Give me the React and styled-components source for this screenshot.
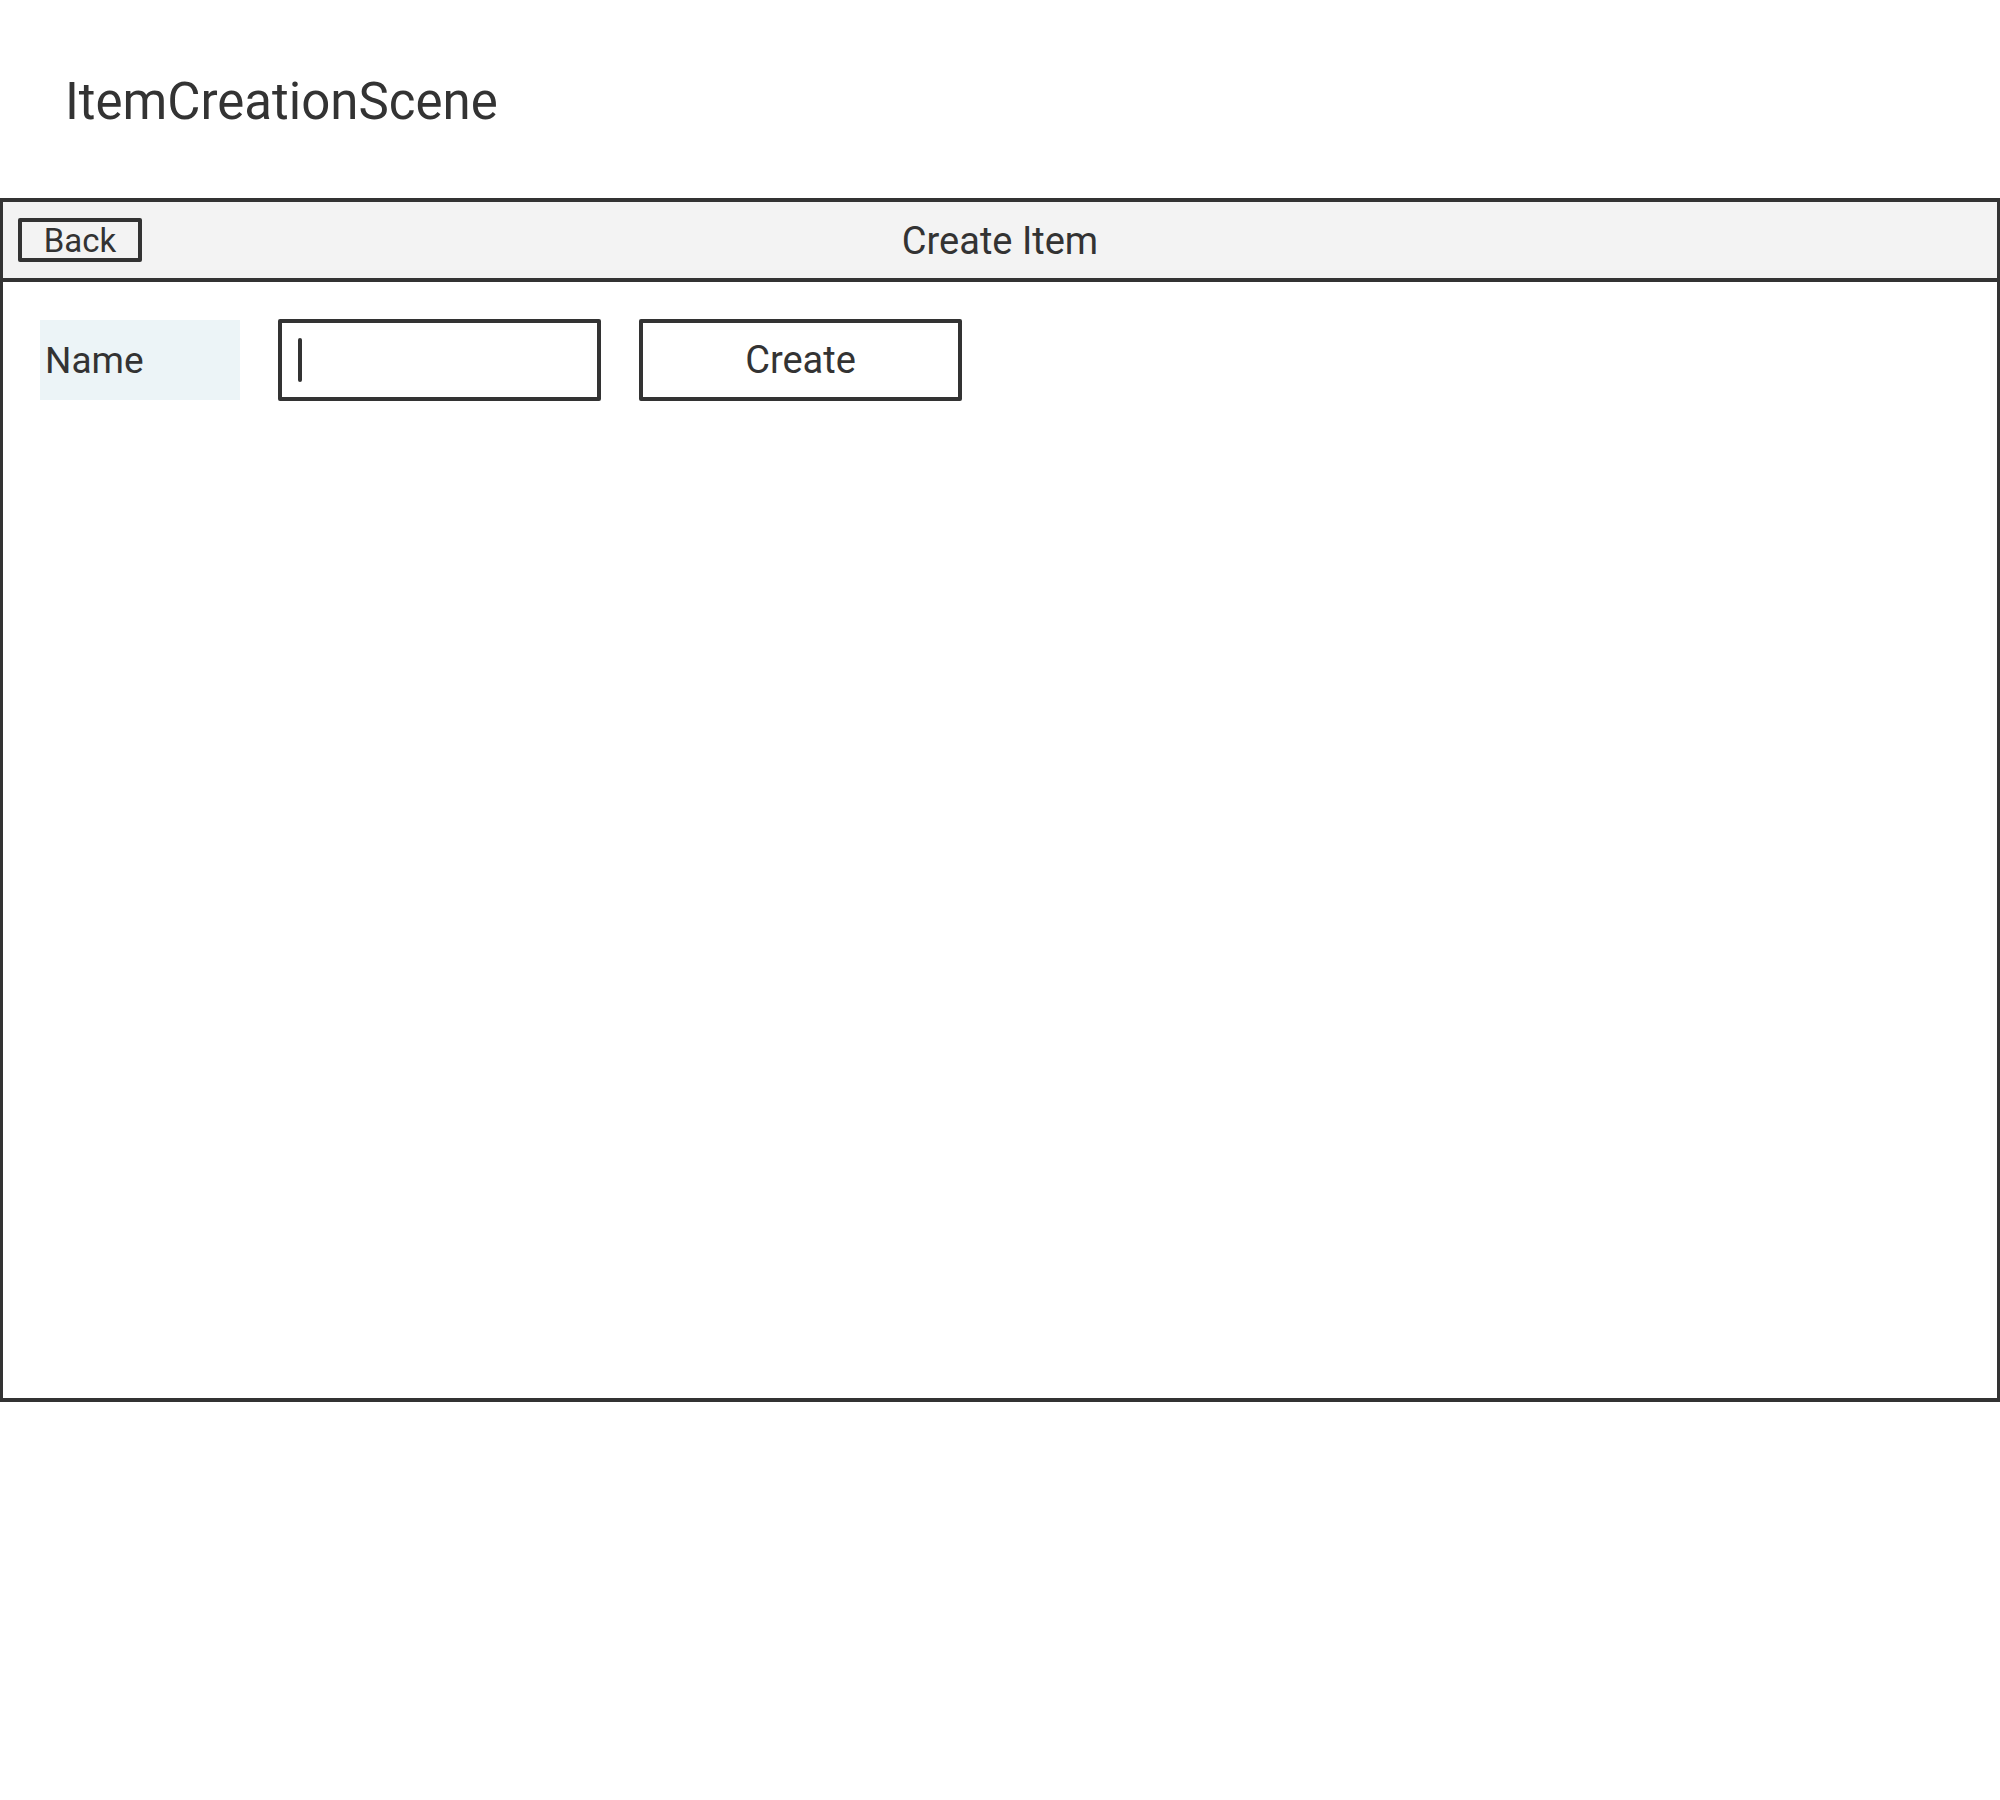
import React from "react";
import styled, { createGlobalStyle } from "styled-components";

const GlobalStyle = createGlobalStyle`
  html, body {
    margin: 0;
    padding: 0;
    background: #ffffff;
  }
  body {
    font-family: Roboto, "Liberation Sans", sans-serif;
    color: #333333;
  }
`;

const App = () => {
  return (
    <Page>
      <GlobalStyle />
      <SceneTitle>ItemCreationScene</SceneTitle>
      <Frame>
        <NavBar>
          <NavLeft>
            <BackButton>Back</BackButton>
          </NavLeft>
          <NavTitle>Create Item</NavTitle>
          <div />
        </NavBar>
        <Content>
          <FormRow>
            <FieldLabel>Name</FieldLabel>
            <TextField>
              <Caret />
            </TextField>
            <ActionButton>Create</ActionButton>
          </FormRow>
        </Content>
      </Frame>
    </Page>
  );
};

export default App;

const Page = styled.div`
  width: 2000px;
  min-height: 1800px;
  background: #fff;
`;

const SceneTitle = styled.h1`
  margin: 0;
  height: 198px;
  display: flex;
  align-items: center;
  padding-left: 65px;
  padding-top: 4px;
  box-sizing: border-box;
  font-size: 51px;
  font-weight: 400;
  line-height: 1;
  color: #333;
`;

const Frame = styled.div`
  width: 2000px;
  height: 1204px;
  box-sizing: border-box;
  border: 3px solid #333;
  border-top-width: 4px;
  border-bottom-width: 4px;
  display: flex;
  flex-direction: column;
`;

const NavBar = styled.div`
  height: 80px;
  box-sizing: border-box;
  background: #f3f3f3;
  border-bottom: 4px solid #333;
  display: grid;
  grid-template-columns: 1fr auto 1fr;
  align-items: center;
`;

const NavLeft = styled.div`
  padding-left: 15px;
  display: flex;
  align-items: center;
`;

const BackButton = styled.button`
  width: 124px;
  height: 44px;
  box-sizing: border-box;
  border: 4px solid #333;
  border-radius: 2px;
  background: transparent;
  padding: 0;
  font-family: Roboto, "Liberation Sans", sans-serif;
  font-size: 33px;
  line-height: 1;
  color: #333;
  cursor: pointer;
`;

const NavTitle = styled.div`
  font-size: 38px;
  line-height: 1;
  padding-top: 2px;
  color: #333;
`;

const Content = styled.div`
  flex: 1;
  padding: 37px 37px;
`;

const FormRow = styled.div`
  display: flex;
  align-items: center;
  gap: 38px;
`;

const FieldLabel = styled.div`
  width: 200px;
  height: 80px;
  box-sizing: border-box;
  background: #ecf4f7;
  display: flex;
  align-items: center;
  padding-left: 5px;
  font-size: 37px;
  color: #333;
`;

const TextField = styled.div`
  width: 323px;
  height: 82px;
  box-sizing: border-box;
  border: 4px solid #333;
  border-radius: 2px;
  display: flex;
  align-items: center;
  padding-left: 16px;
`;

const Caret = styled.span`
  display: block;
  width: 4px;
  height: 44px;
  border-radius: 2px;
  background: #333;
`;

const ActionButton = styled.button`
  width: 323px;
  height: 82px;
  box-sizing: border-box;
  border: 4px solid #333;
  border-radius: 2px;
  background: #fff;
  padding: 0;
  font-family: Roboto, "Liberation Sans", sans-serif;
  font-size: 38px;
  color: #333;
  cursor: pointer;
`;
